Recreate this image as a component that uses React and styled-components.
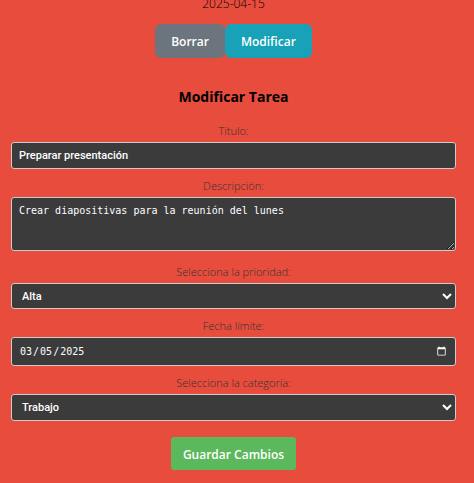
import React, { useState } from 'react';
import styled, { createGlobalStyle } from 'styled-components';

const GlobalStyle = createGlobalStyle`
  *, *::before, *::after { box-sizing: border-box; }
  body {
    margin: 0;
    background: #e74c3c;
    color: #000;
    font-family: "Open Sans", "Noto Sans", sans-serif;
    overflow: hidden;
  }
`;

const Card = styled.main`
  display: flex;
  flex-direction: column;
  align-items: center;
  padding: 0 18px 13px 11px;
`;

const DueDate = styled.time`
  height: 12px;
  margin-bottom: 12px;
  display: flex;
  align-items: flex-end;
  font-size: 12px;
  font-weight: 300;
  line-height: 16px;
`;

const Actions = styled.div`
  display: flex;
  margin-bottom: 28px;
`;

const Button = styled.button`
  height: ${({ $compact }) => ($compact ? '33px' : '34px')};
  padding: 2px ${({ $compact }) => ($compact ? '12px' : '16px')} 0;
  border: 0;
  border-radius: ${({ $compact }) => ($compact ? '3px' : '6px')};
  background: ${({ $color }) => $color};
  color: #fff;
  font-family: inherit;
  font-size: 12px;
  font-weight: 600;
  line-height: 20px;
  white-space: nowrap;
  cursor: pointer;
`;

const Heading = styled.h3`
  margin: 0 0 14px;
  font-size: 14px;
  font-weight: 700;
  line-height: 22px;
`;

const Form = styled.form`
  display: flex;
  flex-direction: column;
  align-items: center;
  width: 100%;
`;

const Field = styled.div`
  display: flex;
  flex-direction: column;
  width: 100%;
  margin-bottom: ${({ $gap }) => $gap || '8px'};
`;

const Label = styled.label`
  margin-bottom: 2px;
  color: #333;
  font-size: 11px;
  font-weight: 300;
  line-height: 18px;
  text-align: center;
`;

const controlStyles = `
  display: block;
  width: 100%;
  margin: 0;
  border: 1px solid #ccc;
  border-radius: 3px;
  outline: none;
  background-color: #3b3b3b;
  color: #fff;
  color-scheme: dark;
`;

const TextInput = styled.input`
  ${controlStyles}
  height: 27px;
  padding: 0 7px;
  font: 500 11px Roboto, "Liberation Sans", sans-serif;
`;

const TextArea = styled.textarea`
  ${controlStyles}
  height: 54px;
  padding: 6px 7px;
  font: 10px/14px "DejaVu Sans Mono", monospace;
  resize: vertical;
`;

const DateInput = styled.input`
  ${controlStyles}
  height: 29px;
  padding: 0 6px 0 7px;
  font: 10px "DejaVu Sans Mono", monospace;

  &::-webkit-calendar-picker-indicator {
    width: 11px;
    height: 11px;
    padding: 0 2px;
  }
`;

const Select = styled.select`
  ${controlStyles}
  height: ${({ $height }) => $height || '27px'};
  padding: 0 0 0 6px;
  font: 500 11px Roboto, "Liberation Sans", sans-serif;
`;

export default function App() {
  const [task, setTask] = useState({
    title: 'Preparar presentación',
    description: 'Crear diapositivas para la reunión del lunes',
    priority: 'Alta',
    date: '2025-03-05',
    category: 'Trabajo',
  });
  const bind = (name) => ({
    id: name,
    name,
    value: task[name],
    onChange: (e) => setTask({ ...task, [name]: e.target.value }),
  });

  return (
    <>
      <GlobalStyle />
      <Card>
        <DueDate dateTime="2025-04-15">2025-04-15</DueDate>
        <Actions>
          <Button type="button" $color="#6c757d">Borrar</Button>
          <Button type="button" $color="#17a2b8">Modificar</Button>
        </Actions>
        <Heading>Modificar Tarea</Heading>
        <Form onSubmit={(e) => e.preventDefault()}>
          <Field>
            <Label htmlFor="title">Título:</Label>
            <TextInput type="text" {...bind('title')} />
          </Field>
          <Field $gap="12px">
            <Label htmlFor="description">Descripción:</Label>
            <TextArea spellCheck={false} {...bind('description')} />
          </Field>
          <Field>
            <Label htmlFor="priority">Selecciona la prioridad:</Label>
            <Select $height="26px" {...bind('priority')}>
              <option>Alta</option>
              <option>Media</option>
              <option>Baja</option>
            </Select>
          </Field>
          <Field>
            <Label htmlFor="date">Fecha límite:</Label>
            <DateInput type="date" {...bind('date')} />
          </Field>
          <Field $gap="16px">
            <Label htmlFor="category">Selecciona la categoría:</Label>
            <Select {...bind('category')}>
              <option>Trabajo</option>
              <option>Personal</option>
              <option>Estudios</option>
            </Select>
          </Field>
          <Button type="submit" $compact $color="#5cb85c">Guardar Cambios</Button>
        </Form>
      </Card>
    </>
  );
}
